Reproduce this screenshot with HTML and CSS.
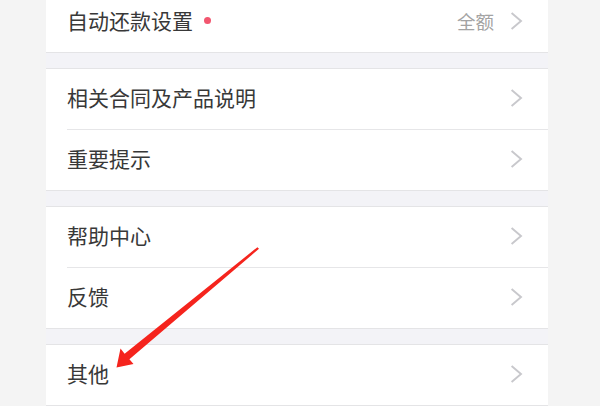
FILE: index.html
```html
<!DOCTYPE html>
<html lang="zh-CN">
<head>
<meta charset="utf-8">
<title>设置</title>
<link rel="stylesheet" href="styles.css">
</head>
<body>
<div class="page">
  <div class="list">
    <div class="group first">
      <div class="row">
        <span class="label">自动还款设置</span><span class="dot"></span>
        <span class="value">全额</span>
        <svg class="chev" width="13" height="18" viewBox="0 0 13 18"><path d="M1.6 1 L11 9 L1.6 17" fill="none" stroke="#c8c8cc" stroke-width="1.9"/></svg>
      </div>
    </div>
    <div class="group">
      <div class="row">
        <span class="label">相关合同及产品说明</span>
        <svg class="chev" width="13" height="18" viewBox="0 0 13 18"><path d="M1.6 1 L11 9 L1.6 17" fill="none" stroke="#c8c8cc" stroke-width="1.9"/></svg>
      </div>
      <div class="row">
        <span class="label">重要提示</span>
        <svg class="chev" width="13" height="18" viewBox="0 0 13 18"><path d="M1.6 1 L11 9 L1.6 17" fill="none" stroke="#c8c8cc" stroke-width="1.9"/></svg>
      </div>
    </div>
    <div class="group">
      <div class="row">
        <span class="label">帮助中心</span>
        <svg class="chev" width="13" height="18" viewBox="0 0 13 18"><path d="M1.6 1 L11 9 L1.6 17" fill="none" stroke="#c8c8cc" stroke-width="1.9"/></svg>
      </div>
      <div class="row">
        <span class="label">反馈</span>
        <svg class="chev" width="13" height="18" viewBox="0 0 13 18"><path d="M1.6 1 L11 9 L1.6 17" fill="none" stroke="#c8c8cc" stroke-width="1.9"/></svg>
      </div>
    </div>
    <div class="group">
      <div class="row">
        <span class="label">其他</span>
        <svg class="chev" width="13" height="18" viewBox="0 0 13 18"><path d="M1.6 1 L11 9 L1.6 17" fill="none" stroke="#c8c8cc" stroke-width="1.9"/></svg>
      </div>
    </div>
  </div>
  <svg class="arrow" width="600" height="406" viewBox="0 0 600 406">
    <polygon points="257.4,247.2 124.6,353.8 120.5,348.5 116.5,367.5 133.5,364 129.4,359.2 259,248.8" fill="#f5241d"/>
  </svg>
</div>
</body>
</html>
```
FILE: styles.css
```css
html, body {
  margin: 0;
  padding: 0;
  background: #f4f4f4;
}
body {
  width: 600px;
  height: 406px;
  overflow: hidden;
  font-family: "Noto Sans CJK SC", "Noto Sans", sans-serif;
}
.page {
  position: relative;
  width: 600px;
  height: 406px;
  overflow: hidden;
}
.list {
  margin-left: 46px;
  width: 502px;
  margin-top: -8px;
  background: #f3f3f7;
}
.group {
  background: #fff;
  border-top: 1px solid #e4e4e6;
  border-bottom: 1px solid #e4e4e6;
  margin-top: 15px;
}
.group.first {
  margin-top: 0;
  border-top: none;
}
.row {
  height: 57px;
  padding-bottom: 3px;
  display: flex;
  align-items: center;
  padding-left: 21px;
  padding-right: 25px;
}
.group .row + .row {
  background:
    linear-gradient(#e6e6e8, #e6e6e8) no-repeat 21px 0 / calc(100% - 21px) 1px;
  padding-top: 1px;
}
.label {
  font-size: 21px;
  color: #383838;
  line-height: 1;
}
.dot {
  width: 7px;
  height: 7px;
  border-radius: 50%;
  background: #f2566f;
  margin-left: 11px;
}
.value {
  margin-left: auto;
  font-size: 18.5px;
  color: #a3a3a3;
  margin-right: 16px;
}
.chev {
  margin-left: auto;
  display: block;
}
.value + .chev {
  margin-left: 0;
}
.arrow {
  position: absolute;
  left: 0;
  top: 0;
}
```
